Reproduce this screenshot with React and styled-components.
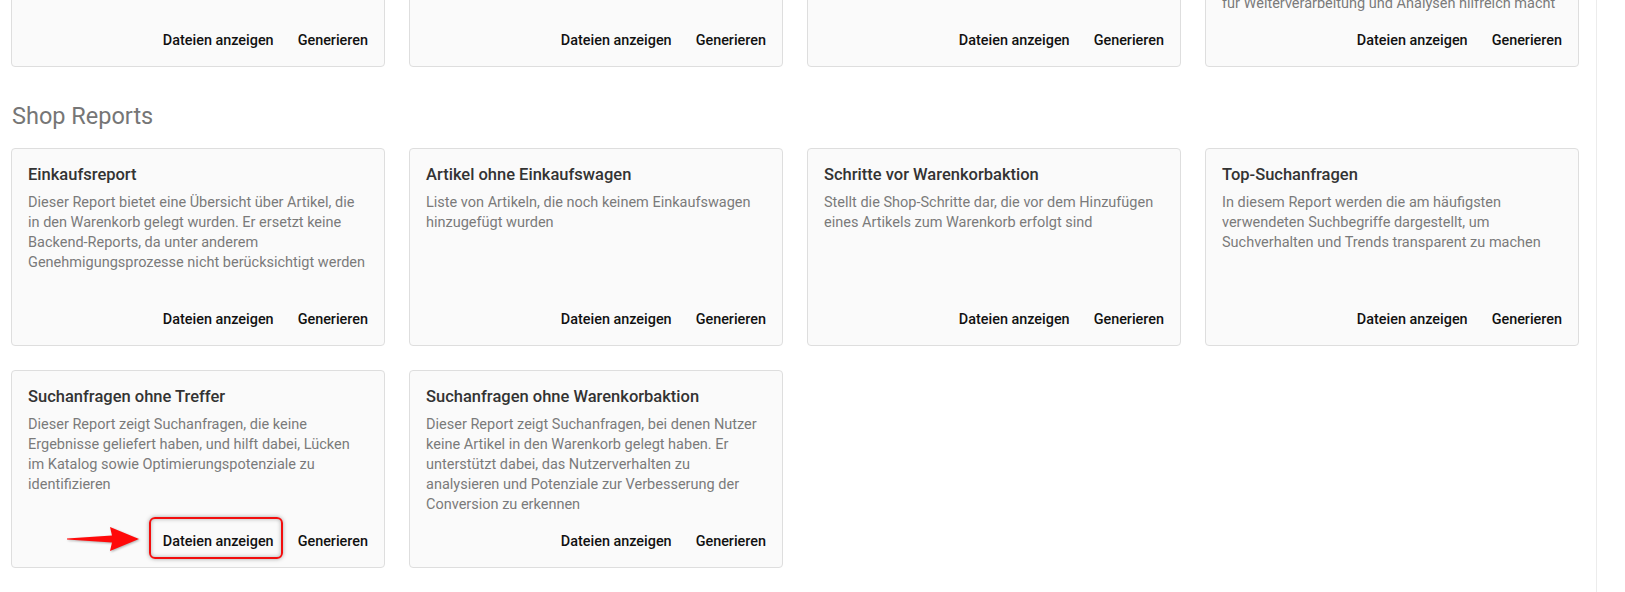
import React from 'react';
import styled, { createGlobalStyle } from 'styled-components';

const GlobalStyle = createGlobalStyle`
  html, body {
    margin: 0;
    padding: 0;
    background: #ffffff;
    font-family: Roboto, "Liberation Sans", Arial, sans-serif;
    overflow: hidden;
  }
`;

const Layout = styled.div`
  display: flex;
  height: 100vh;
  overflow: hidden;
`;

const Main = styled.main`
  flex: 1;
  padding: 0 17px 0 11px;
  overflow: hidden;
`;

// page is scrolled down; the first section is mostly above the fold
const Scrolled = styled.div`
  margin-top: -212px;
`;

const Aside = styled.aside`
  width: 28px;
  border-left: 1px solid #ececec;
  background: #ffffff;
`;

const SectionTitle = styled.h2`
  margin: 36px 0 19px 1px;
  font-size: 23.5px;
  line-height: 26px;
  font-weight: 400;
  color: #767676;
`;

const Grid = styled.div`
  display: grid;
  grid-template-columns: repeat(4, 1fr);
  grid-auto-rows: 1fr;
  column-gap: 24px;
  row-gap: 24px;
`;

const Card = styled.div`
  display: flex;
  flex-direction: column;
  background: #fafafa;
  border: 1px solid #dedede;
  border-radius: 4px;
`;

const CardContent = styled.div`
  padding: 16px 16px 0 16px;
`;

const CardTitle = styled.div`
  font-size: 16.5px;
  line-height: 19px;
  font-weight: 500;
  color: #333333;
  margin-bottom: 9px;
`;

const CardText = styled.div`
  font-size: 14.5px;
  line-height: 20px;
  color: #7a7a7a;
`;

const CardActions = styled.div`
  margin-top: auto;
  display: flex;
  justify-content: flex-end;
  align-items: center;
  padding: 8px;
`;

const ActionButton = styled.button`
  position: relative;
  display: inline-flex;
  align-items: center;
  height: 36px;
  padding: 6px 8px;
  margin-left: 8px;
  border: none;
  border-radius: 4px;
  background: transparent;
  font-family: inherit;
  font-size: 14.4px;
  font-weight: 500;
  color: #111111;
  cursor: pointer;

  &:first-child {
    margin-left: 0;
  }

  ${({ $highlighted }) => $highlighted && `
    &::after {
      content: '';
      position: absolute;
      top: -6px;
      left: -6px;
      right: -1px;
      bottom: 0;
      border: 2px solid #f20d0d;
      border-radius: 6px;
      box-shadow: 0 0 4px rgba(0, 0, 0, 0.35), inset 0 0 4px rgba(0, 0, 0, 0.3);
      pointer-events: none;
    }
  `}
`;

const Arrow = styled.svg`
  position: absolute;
  left: -88px;
  top: 3px;
  width: 74px;
  height: 26px;
  overflow: visible;
  filter: drop-shadow(1px 1px 1px rgba(0, 0, 0, 0.3));
`;

const firstSection = [
  {
    title: 'Bestellreport',
    text: 'Übersicht aller Bestellungen im gewählten Zeitraum',
  },
  {
    title: 'Artikelreport',
    text: 'Liste aller bestellten Artikel mit Mengen und Preisen',
  },
  {
    title: 'Kostenstellenreport',
    text: 'Auswertung der Bestellungen nach Kostenstellen',
  },
  {
    title: 'Rohdatenexport',
    lines: [
      'Dieser Report stellt alle Bestelldaten',
      'inklusive Positionen und Kostenstellen',
      'als strukturierte Rohdaten bereit, was ihn',
      'als CSV-Export insbesondere',
      'für Weiterverarbeitung und Analysen hilfreich macht',
    ],
  },
];

const shopReports = [
  {
    title: 'Einkaufsreport',
    text: 'Dieser Report bietet eine Übersicht über Artikel, die in den Warenkorb gelegt wurden. Er ersetzt keine Backend-Reports, da unter anderem Genehmigungsprozesse nicht berücksichtigt werden',
  },
  {
    title: 'Artikel ohne Einkaufswagen',
    text: 'Liste von Artikeln, die noch keinem Einkaufswagen hinzugefügt wurden',
  },
  {
    title: 'Schritte vor Warenkorbaktion',
    text: 'Stellt die Shop-Schritte dar, die vor dem Hinzufügen eines Artikels zum Warenkorb erfolgt sind',
  },
  {
    title: 'Top-Suchanfragen',
    text: 'In diesem Report werden die am häufigsten verwendeten Suchbegriffe dargestellt, um Suchverhalten und Trends transparent zu machen',
  },
  {
    title: 'Suchanfragen ohne Treffer',
    text: 'Dieser Report zeigt Suchanfragen, die keine Ergebnisse geliefert haben, und hilft dabei, Lücken im Katalog sowie Optimierungspotenziale zu identifizieren',
    highlighted: true,
  },
  {
    title: 'Suchanfragen ohne Warenkorbaktion',
    text: 'Dieser Report zeigt Suchanfragen, bei denen Nutzer keine Artikel in den Warenkorb gelegt haben. Er unterstützt dabei, das Nutzerverhalten zu analysieren und Potenziale zur Verbesserung der Conversion zu erkennen',
  },
];

function ReportCard({ report }) {
  return (
    <Card>
      <CardContent>
        <CardTitle>{report.title}</CardTitle>
        <CardText>
          {report.lines
            ? report.lines.map((line, i) => (
                <React.Fragment key={i}>
                  {line}
                  {i < report.lines.length - 1 && <br />}
                </React.Fragment>
              ))
            : report.text}
        </CardText>
      </CardContent>
      <CardActions>
        <ActionButton $highlighted={report.highlighted}>
          {report.highlighted && (
            <Arrow viewBox="0 0 74 26">
              <path
                d="M0 12.4 L45 9.6 L43 1 L72 13 L43 25 L45 16.4 L0 13.6 Z"
                fill="#ff0a0a"
              />
            </Arrow>
          )}
          Dateien anzeigen
        </ActionButton>
        <ActionButton>Generieren</ActionButton>
      </CardActions>
    </Card>
  );
}

export default function App() {
  return (
    <>
      <GlobalStyle />
      <Layout>
        <Main>
          <Scrolled>
            <SectionTitle>Standard Reports</SectionTitle>
            <Grid>
              {firstSection.map((r) => (
                <ReportCard key={r.title} report={r} />
              ))}
            </Grid>

            <SectionTitle>Shop Reports</SectionTitle>
            <Grid>
              {shopReports.map((r) => (
                <ReportCard key={r.title} report={r} />
              ))}
            </Grid>
          </Scrolled>
        </Main>
        <Aside />
      </Layout>
    </>
  );
}
